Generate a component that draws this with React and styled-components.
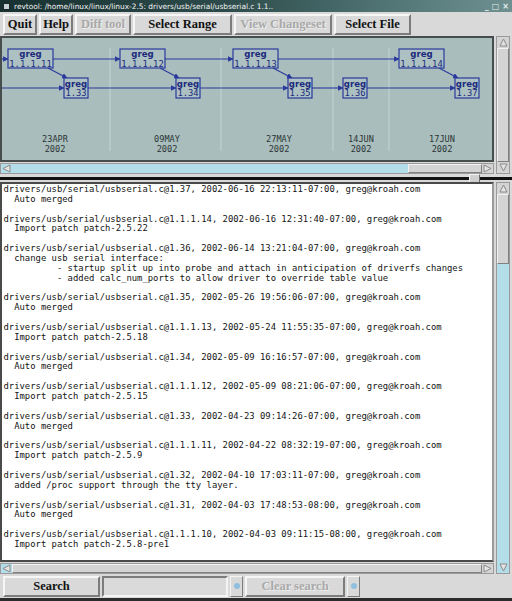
import React from "react";
import styled, { createGlobalStyle } from "styled-components";

const GlobalStyle = createGlobalStyle`
  html, body { margin: 0; padding: 0; background: #d9d9d9; overflow: hidden; }
  #root { width: 512px; height: 601px; }
`;

const Window = styled.div`
  width: 512px;
  height: 601px;
  display: flex;
  flex-direction: column;
  background: #d9d9d9;
  box-sizing: border-box;
  overflow: hidden;
`;

const TitleBar = styled.div`
  height: 12px;
  flex: none;
  display: flex;
  align-items: center;
  gap: 4px;
  padding: 0 3px;
  background: linear-gradient(to right, #183030, #2e4c4c 45%, #567a7a 80%, #6f9090);
  color: #f4f4f4;
  font: 7.4px "DejaVu Sans", sans-serif;
  white-space: nowrap;
`;

const TitleText = styled.span`
  flex: 1;
  overflow: hidden;
`;

const TitleIcon = styled.span`
  width: 5px;
  height: 5px;
  background: #c8d4d4;
  border: 1px solid #1a2a2a;
`;

const WinControls = styled.span`
  display: flex;
  gap: 3px;
  font: bold 8px "DejaVu Sans", sans-serif;
  color: #e6eeee;
`;

const Toolbar = styled.div`
  height: 24px;
  flex: none;
  display: flex;
  align-items: center;
  gap: 2px;
  padding: 0 3px;
`;

const Button = styled.button`
  width: ${(p) => p.$w}px;
  height: 21px;
  flex: none;
  padding: 0;
  background: #d9d9d9;
  border: 2px solid;
  border-color: #f6f6f6 #7c7c7c #7c7c7c #f6f6f6;
  font: bold 12.5px "Liberation Serif", serif;
  color: ${(p) => (p.disabled ? "#a9a9a9" : "#111")};
  ${(p) => p.disabled && "text-shadow: 1px 1px 0 #eeeeee;"}
`;

const Pane = styled.div`
  flex: none;
  height: ${(p) => p.$h}px;
  display: grid;
  grid-template-columns: 494px 14px;
  grid-template-rows: 1fr 11px;
  column-gap: 2px;
  row-gap: 1px;
`;

const TextPane = styled(Pane)`
  flex: 1;
  height: auto;
`;

const CanvasFrame = styled.div`
  border: 2px solid #474c4c;
  background: #a9bdbd;
  overflow: hidden;
`;

const TextFrame = styled.div`
  border: 2px solid #4a4a4a;
  border-right-color: #9a9a9a;
  background: #ffffff;
  overflow: hidden;
`;

const LogText = styled.pre`
  margin: 0;
  padding: 1px 1px 0 1.5px;
  font: 8.9px/9.86px "DejaVu Sans Mono", monospace;
  color: #141414;
  white-space: pre;
`;

const HScroll = styled.div`
  display: flex;
  align-items: stretch;
  background: ${(p) => p.$trough};
  border: 1px solid #9a9a9a;
`;

const Trough = styled.div`
  flex: 1;
  display: flex;
  justify-content: ${(p) => (p.$end ? "flex-end" : "flex-start")};
`;

const HSlider = styled.div`
  width: ${(p) => (p.$w ? `${p.$w}px` : "100%")};
  background: #d4d4d4;
  border: 1px solid;
  border-color: #f2f2f2 #808080 #808080 #f2f2f2;
  box-sizing: border-box;
`;

const VScroll = styled.div`
  grid-row: 1 / 3;
  grid-column: 2;
  display: flex;
  flex-direction: column;
  background: #b3dde9;
  border: 1px solid #9a9a9a;
`;

const VTrough = styled.div`
  flex: 1;
  display: flex;
  flex-direction: column;
`;

const VSlider = styled.div`
  height: ${(p) => (p.$h ? `${p.$h}px` : "100%")};
  background: #d4d4d4;
  border: 1px solid;
  border-color: #f2f2f2 #808080 #808080 #f2f2f2;
  box-sizing: border-box;
`;

const ArrowBox = styled.div`
  flex: none;
  width: ${(p) => (p.$v ? "auto" : "11px")};
  height: ${(p) => (p.$v ? "11px" : "auto")};
  display: flex;
  align-items: center;
  justify-content: center;
  background: ${(p) => p.$bg || "#d4d4d4"};
`;

const Sash = styled.div`
  height: 8px;
  flex: none;
  display: flex;
  align-items: center;
`;

const SashLine = styled.div`
  height: 3px;
  width: ${(p) => (p.$w ? `${p.$w}px` : "auto")};
  flex: ${(p) => (p.$w ? "none" : "1")};
  background: #111;
`;

const SashHandle = styled.div`
  width: 9px;
  height: 7px;
  background: #cfcfcf;
  border: 1px solid;
  border-color: #f4f4f4 #6a6a6a #6a6a6a #f4f4f4;
`;

const SearchBar = styled.div`
  height: 24px;
  flex: none;
  display: flex;
  align-items: center;
  gap: 2px;
  padding: 0 3px;
`;

const Entry = styled.div`
  width: 122px;
  height: 17px;
  background: #dadada;
  border: 2px solid;
  border-color: #7c7c7c #f4f4f4 #f4f4f4 #7c7c7c;
`;

const BallBox = styled.div`
  width: 13px;
  height: 21px;
  display: flex;
  align-items: center;
  justify-content: center;
  border: 1px solid;
  border-color: #f4f4f4 #7c7c7c #7c7c7c #f4f4f4;
  box-sizing: border-box;
`;

const Ball = styled.span`
  width: 6px;
  height: 6px;
  border-radius: 50%;
  background: #8fbfdc;
`;

const BottomEdge = styled.div`
  height: 3px;
  flex: none;
  background: #2c2c2c;
`;

function Arrow({ dir }) {
  const pts = {
    left: "8,1 8,8 1,4.5",
    right: "1,1 1,8 8,4.5",
    up: "4.5,1 8,8 1,8",
    down: "1,1 8,1 4.5,8",
  }[dir];
  return (
    <svg width="9" height="9" viewBox="0 0 9 9">
      <polygon points={pts} fill="#e4e4e4" stroke="#8a8a8a" strokeWidth="1" />
    </svg>
  );
}

const topNodes = [
  { x: 8, label: "1.1.1.11" },
  { x: 120, label: "1.1.1.12" },
  { x: 233, label: "1.1.1.13" },
  { x: 399, label: "1.1.1.14" },
];
const bottomNodes = [
  { x: 64, label: "1.33" },
  { x: 176, label: "1.34" },
  { x: 288, label: "1.35" },
  { x: 343, label: "1.36" },
  { x: 455, label: "1.37" },
];
const topEdges = [[0, 8], [53, 120], [165, 233], [278, 399]];
const bottomEdges = [[0, 64], [88, 176], [200, 288], [312, 343], [367, 455]];
const dates = [
  { x: 55, d: "23APR" },
  { x: 167, d: "09MAY" },
  { x: 279, d: "27MAY" },
  { x: 361, d: "14JUN" },
  { x: 442, d: "17JUN" },
];
const seps = [110, 221, 333, 389];

const BLUE = "#2a399c";

function Graph() {
  return (
    <svg width="490" height="123" viewBox="2 38 490 123">
      <defs>
        <marker id="ah" markerWidth="5" markerHeight="5" refX="4.5" refY="2.5" orient="auto">
          <path d="M0,0 L5,2.5 L0,5 z" fill={BLUE} />
        </marker>
      </defs>
      {seps.map((x) => (
        <line key={x} x1={x} y1="48" x2={x} y2="151" stroke="#c6d4d4" strokeWidth="1" />
      ))}
      {topEdges.map(([a, b]) => (
        <line key={a} x1={a} y1="59" x2={b} y2="59" stroke={BLUE} strokeWidth="1.1" markerEnd="url(#ah)" />
      ))}
      {bottomEdges.map(([a, b]) => (
        <line key={a} x1={a} y1="88" x2={b} y2="88" stroke={BLUE} strokeWidth="1.1" markerEnd="url(#ah)" />
      ))}
      {topNodes.map((n) => (
        <line key={n.x} x1={n.x + 40} y1="68" x2={n.x + 59} y2="78" stroke={BLUE} strokeWidth="1.1" markerEnd="url(#ah)" />
      ))}
      {topNodes.map((n) => (
        <g key={n.label}>
          <rect x={n.x} y="49" width="45" height="19" fill="#adc1c3" stroke={BLUE} strokeWidth="1.2" />
          <text x={n.x + 22.5} y="56.5" textAnchor="middle" fontFamily="DejaVu Sans, sans-serif" fontWeight="bold" fontSize="8.6" fill="#1c2a7c">greg</text>
          <text x={n.x + 22.5} y="66.5" textAnchor="middle" fontFamily="DejaVu Sans Mono, monospace" fontSize="8.8" fill="#1c2a7c">{n.label}</text>
        </g>
      ))}
      {bottomNodes.map((n) => (
        <g key={n.label}>
          <rect x={n.x} y="78" width="24" height="20" fill="#adc1c3" stroke={BLUE} strokeWidth="1.2" />
          <text x={n.x + 12} y="86.5" textAnchor="middle" fontFamily="DejaVu Sans, sans-serif" fontWeight="bold" fontSize="8.6" fill="#1c2a7c">greg</text>
          <text x={n.x + 12} y="96" textAnchor="middle" fontFamily="DejaVu Sans Mono, monospace" fontSize="8.8" fill="#1c2a7c">{n.label}</text>
        </g>
      ))}
      {dates.map((d) => (
        <g key={d.d} fontFamily="DejaVu Sans Mono, monospace" fontSize="8.6" fill="#2c3636" textAnchor="middle">
          <text x={d.x} y="141.5">{d.d}</text>
          <text x={d.x} y="151.5">2002</text>
        </g>
      ))}
    </svg>
  );
}

const P = "drivers/usb/serial/usbserial.c@";
const entries = [
  ["1.37, 2002-06-16 22:13:11-07:00", ["Auto merged"]],
  ["1.1.1.14, 2002-06-16 12:31:40-07:00", ["Import patch patch-2.5.22"]],
  ["1.36, 2002-06-14 13:21:04-07:00", [
    "change usb serial interface:",
    "        - startup split up into probe and attach in anticipation of driverfs changes",
    "        - added calc_num_ports to allow driver to override table value",
  ]],
  ["1.35, 2002-05-26 19:56:06-07:00", ["Auto merged"]],
  ["1.1.1.13, 2002-05-24 11:55:35-07:00", ["Import patch patch-2.5.18"]],
  ["1.34, 2002-05-09 16:16:57-07:00", ["Auto merged"]],
  ["1.1.1.12, 2002-05-09 08:21:06-07:00", ["Import patch patch-2.5.15"]],
  ["1.33, 2002-04-23 09:14:26-07:00", ["Auto merged"]],
  ["1.1.1.11, 2002-04-22 08:32:19-07:00", ["Import patch patch-2.5.9"]],
  ["1.32, 2002-04-10 17:03:11-07:00", ["added /proc support through the tty layer."]],
  ["1.31, 2002-04-03 17:48:53-08:00", ["Auto merged"]],
  ["1.1.1.10, 2002-04-03 09:11:15-08:00", ["Import patch patch-2.5.8-pre1"]],
];

const logText = entries
  .map(([head, body]) => [P + head + ", greg@kroah.com", ...body.map((l) => "  " + l)].join("\n"))
  .join("\n\n");

export default function App() {
  return (
    <Window>
      <GlobalStyle />
      <TitleBar>
        <TitleIcon />
        <TitleText>revtool: /home/linux/linux/linux-2.5: drivers/usb/serial/usbserial.c 1.1..</TitleText>
        <WinControls>
          <span>_</span>
          <span>□</span>
          <span>×</span>
        </WinControls>
      </TitleBar>

      <Toolbar>
        <Button $w={34}>Quit</Button>
        <Button $w={34}>Help</Button>
        <Button $w={56} disabled>Diff tool</Button>
        <Button $w={99}>Select Range</Button>
        <Button $w={98} disabled>View Changeset</Button>
        <Button $w={77}>Select File</Button>
      </Toolbar>

      <Pane $h={138}>
        <CanvasFrame>
          <Graph />
        </CanvasFrame>
        <HScroll $trough="#b3dde9">
          <ArrowBox $bg="#b3dde9"><Arrow dir="left" /></ArrowBox>
          <Trough $end>
            <HSlider $w={74} />
          </Trough>
          <ArrowBox><Arrow dir="right" /></ArrowBox>
        </HScroll>
        <VScroll>
          <ArrowBox $v><Arrow dir="up" /></ArrowBox>
          <VTrough>
            <VSlider />
          </VTrough>
          <ArrowBox $v><Arrow dir="down" /></ArrowBox>
        </VScroll>
      </Pane>

      <Sash>
        <SashLine $w={469} />
        <SashHandle />
        <SashLine />
      </Sash>

      <TextPane>
        <TextFrame>
          <LogText>{logText}</LogText>
        </TextFrame>
        <HScroll $trough="#d4d4d4">
          <ArrowBox $bg="#b3dde9"><Arrow dir="left" /></ArrowBox>
          <Trough>
            <HSlider />
          </Trough>
          <ArrowBox><Arrow dir="right" /></ArrowBox>
        </HScroll>
        <VScroll>
          <ArrowBox $v><Arrow dir="up" /></ArrowBox>
          <VTrough>
            <VSlider $h={70} />
          </VTrough>
          <ArrowBox $v $bg="#b3dde9"><Arrow dir="down" /></ArrowBox>
        </VScroll>
      </TextPane>

      <SearchBar>
        <Button $w={97}>Search</Button>
        <Entry />
        <BallBox><Ball /></BallBox>
        <Button $w={100} disabled>Clear search</Button>
        <BallBox><Ball /></BallBox>
      </SearchBar>
      <BottomEdge />
    </Window>
  );
}
